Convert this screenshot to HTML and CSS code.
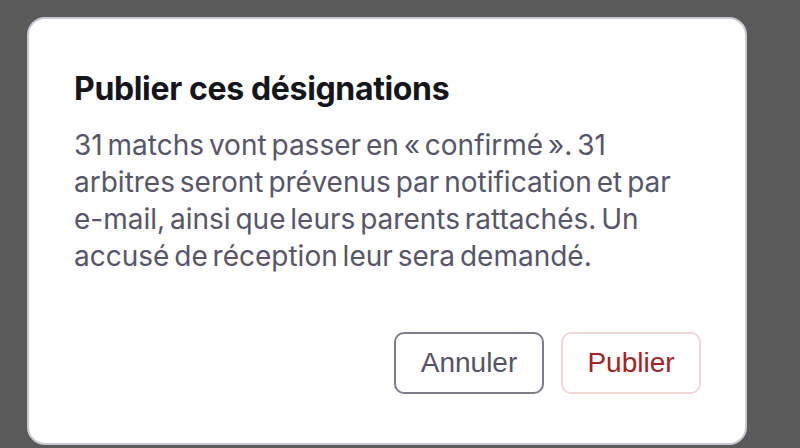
FILE: index.html
```html
<!DOCTYPE html>
<html lang="fr">
<head>
    <meta charset="UTF-8">
    <meta name="viewport" content="width=device-width, initial-scale=1.0">
    <title>Publier ces désignations</title>
    <link rel="stylesheet" href="styles.css">
</head>
<body>
    <div class="overlay">
        <div class="dialog">
            <h2 class="dialog-title">Publier ces désignations</h2>
            <p class="dialog-text">31 matchs vont passer en « confirmé ». 31 arbitres seront prévenus par notification et par e-mail, ainsi que leurs parents rattachés. Un accusé de réception leur sera demandé.</p>
            <div class="dialog-actions">
                <button class="btn btn-cancel">Annuler</button>
                <button class="btn btn-confirm">Publier</button>
            </div>
        </div>
    </div>
</body>
</html>
```

FILE: styles.css
```css
html, body {
    margin: 0;
    height: 100%;
}

body {
    background: #5a5a5a;
    font-family: 'Inter', 'Noto Sans', sans-serif;
    overflow: hidden;
}

.overlay {
    padding: 17px 53px 0 27px;
}

.dialog {
    box-sizing: border-box;
    height: 428px;
    background: #fff;
    border: 2px solid #c9c7d3;
    border-radius: 18px;
    padding: 50px 44px 0 45px;
}

.dialog-title {
    margin: 0 0 18px;
    font-size: 32px;
    font-weight: 700;
    line-height: 40px;
    color: #15151c;
    letter-spacing: -0.35px;
}

.dialog-text {
    margin: 0;
    max-width: 620px;
    font-size: 28px;
    line-height: 37px;
    color: #575669;
    word-spacing: -3px;
}

.dialog-actions {
    display: flex;
    justify-content: flex-end;
    gap: 17px;
    margin-top: 57px;
}

.btn {
    font-family: 'Liberation Sans', Arial, sans-serif;
    font-size: 28px;
    height: 62px;
    background: #fff;
    border-radius: 10px;
    cursor: pointer;
}

.btn-cancel {
    width: 150px;
    border: 2px solid #7d7c8a;
    color: #545464;
}

.btn-confirm {
    width: 140px;
    border: 2px solid #f3d7d7;
    color: #a52222;
}
```
